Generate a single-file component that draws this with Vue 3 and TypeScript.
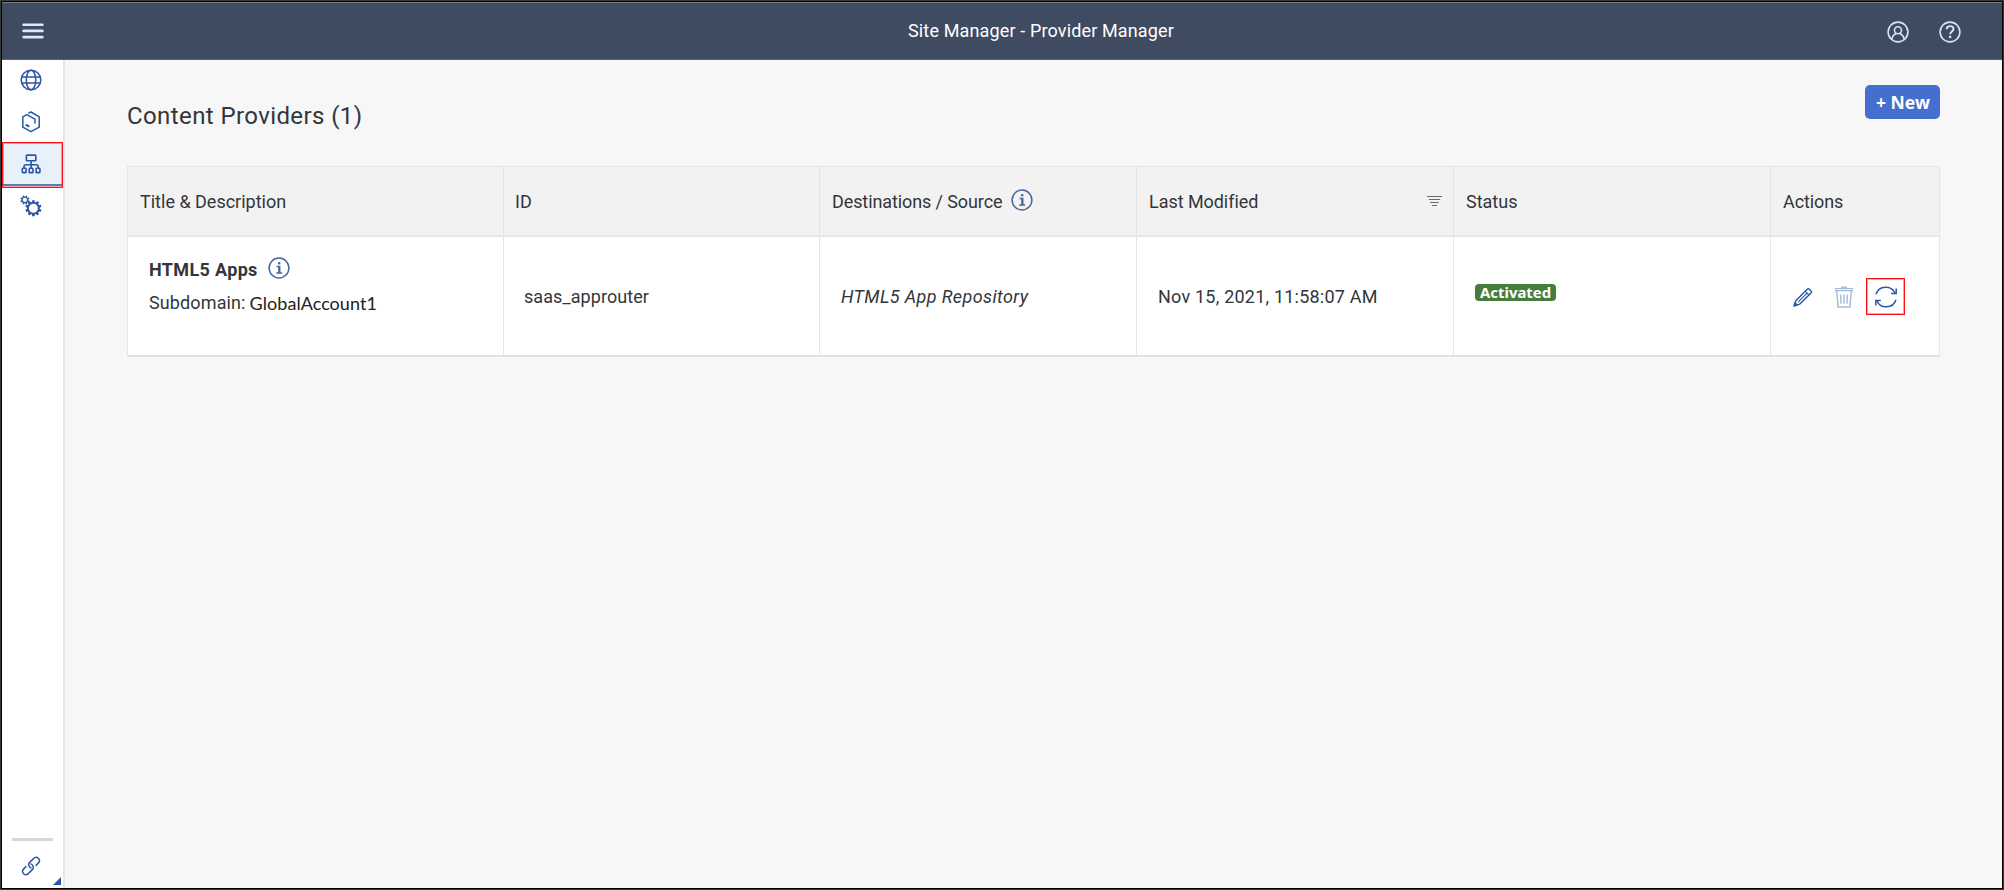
<script setup lang="ts">
interface Provider {
  title: string
  subdomain: string
  id: string
  source: string
  modified: string
  status: string
}

const providers: Provider[] = [
  {
    title: 'HTML5 Apps',
    subdomain: 'GlobalAccount1',
    id: 'saas_approuter',
    source: 'HTML5 App Repository',
    modified: 'Nov 15, 2021, 11:58:07 AM',
    status: 'Activated',
  },
]

// Outline of a cog wheel with square teeth, centred on (cx, cy)
function cog(cx: number, cy: number, outer: number, inner: number, teeth: number): string {
  const step = (Math.PI * 2) / teeth
  const pts: string[] = []
  for (let i = 0; i < teeth; i++) {
    const a = i * step + step / 2
    const corners: [number, number][] = [[-0.32, inner], [-0.26, outer], [0.26, outer], [0.32, inner]]
    for (const [f, r] of corners) {
      const x = cx + Math.cos(a + f * step) * r
      const y = cy + Math.sin(a + f * step) * r
      pts.push(`${x.toFixed(2)} ${y.toFixed(2)}`)
    }
  }
  return `M${pts.join('L')}Z`
}

const bigCog = cog(13.4, 13.3, 8.1, 6.4, 10)
const smallCog = cog(4.9, 4.9, 4.6, 3.3, 8)
</script>

<template>
  <div class="frame">
    <div class="app">
      <header class="shell">
        <button class="plain menu" aria-label="Menu">
          <svg width="22" height="16" viewBox="0 0 22 16"><path d="M1.6 1.7h18.8M1.6 7.9h18.8M1.6 14.1h18.8" stroke="#d8e9fb" stroke-width="2.6" stroke-linecap="round" /></svg>
        </button>
        <h1>Site Manager - Provider Manager</h1>
        <div class="tools">
          <svg width="22" height="22" viewBox="0 0 22 22" fill="none" stroke="#d3e6fa" stroke-width="1.6">
            <circle cx="11" cy="11" r="9.9" />
            <circle cx="11" cy="9.2" r="3.5" />
            <path d="M4.9 18.2c.4-3.2 2.6-4.9 4.2-5.4M17.1 18.2c-.4-3.2-2.6-4.9-4.2-5.4" />
          </svg>
          <svg width="22" height="22" viewBox="0 0 22 22" fill="none" stroke="#d3e6fa" stroke-width="1.6">
            <circle cx="11" cy="11" r="9.9" />
            <path d="M7.7 8.2c0-2 1.4-3.1 3.4-3.1s3.4 1.2 3.4 2.9c0 2.6-3.3 2.5-3.3 5.2" stroke-width="1.9" />
            <path d="M11.1 14.8v2.3" stroke-width="2.3" />
          </svg>
        </div>
      </header>

      <div class="body">
        <nav class="side">
          <a class="item globe">
            <svg width="22" height="22" viewBox="0 0 22 22" fill="none" stroke="#2c55a2" stroke-width="1.5">
              <circle cx="11" cy="11" r="9.8" />
              <ellipse cx="11" cy="11" rx="4.7" ry="9.8" />
              <path d="M2 7.9h18M2 14.1h18" />
            </svg>
          </a>
          <a class="item box">
            <svg width="20" height="22" viewBox="0 0 20 22" fill="none" stroke="#2c55a2" stroke-width="1.5">
              <path d="M7.4 2.2 10 1l8.2 4.8v10.4L10 20.6l-8.2-4.4V5.8l4-2.1 8.2 4.5v4.4" stroke-linejoin="round" />
              <path d="m4.7 13.7 3.6 2" stroke-width="2" />
            </svg>
          </a>
          <a class="item org active">
            <svg width="20" height="20" viewBox="0 0 20 20" fill="none" stroke="#2c55a2" stroke-width="1.6">
              <rect x="5.4" y="1.1" width="9.4" height="5.6" rx=".7" />
              <path d="M10.1 6.7v7.2M3 13.9v-1.2c0-1.2.8-2 2-2h10.2c1.2 0 2 .8 2 2v1.2" />
              <rect x="1.3" y="14.3" width="3.8" height="4.3" rx=".7" />
              <rect x="8.2" y="14.3" width="3.8" height="4.3" rx=".7" />
              <rect x="15.1" y="14.3" width="3.8" height="4.3" rx=".7" />
            </svg>
          </a>
          <a class="item cogs">
            <svg width="22" height="22" viewBox="0 0 22 22" fill="#2c55a2" fill-rule="evenodd">
              <path :d="bigCog + 'M8.9 13.3a4.5 4.5 0 1 0 9 0a4.5 4.5 0 1 0-9 0Z'" />
              <path :d="smallCog + 'M2.8 4.9a2.1 2.1 0 1 0 4.2 0a2.1 2.1 0 1 0-4.2 0Z'" />
            </svg>
          </a>
          <div class="foot">
            <hr />
            <svg class="link" width="20" height="20" viewBox="0 0 20 20" fill="none" stroke="#2c55a2" stroke-width="1.5">
              <g transform="rotate(-45 10 10)">
                <path d="M8.6 12c-.9-2.9.3-5.5 3-5.5h5.6c4.6 0 4.6 6.6 0 6.6h-3.8" />
                <path d="M11.4 8c.9 2.9-.3 5.5-3 5.5H2.8c-4.6 0-4.6-6.6 0-6.6h3.8" />
              </g>
            </svg>
            <svg class="corner" width="8" height="8" viewBox="0 0 8 8"><path d="M8 0v8H0z" fill="#2c55a2" /></svg>
          </div>
        </nav>

        <main>
          <div class="bar">
            <h2>Content Providers (1)</h2>
            <button class="new">+ New</button>
          </div>

          <section class="table">
            <div class="row head">
              <div><span>Title &amp; Description</span></div>
              <div><span>ID</span></div>
              <div>
                <span class="t3">Destinations / Source</span>
                <svg class="info" width="22" height="22" viewBox="0 0 22 22" fill="none" stroke="#48669b" stroke-width="1.5">
                  <circle cx="11" cy="11" r="9.9" />
                  <path d="M8.6 9.4h2.7v6.4M8.3 16h5.8" stroke-width="1.5" /><path d="M11.4 9v7" stroke-width="2.1" /><path d="M11.2 5.1v2.3" stroke-width="2.3" />
                </svg>
              </div>
              <div>
                <span class="t4">Last Modified</span>
                <svg class="filter" width="15" height="11" viewBox="0 0 15 11" stroke="#6a6d70" stroke-width="1"><path d="M0 .5h15M1.8 3.5h11.4M3.2 6.5h8.6M5 9.5h5" /></svg>
              </div>
              <div><span>Status</span></div>
              <div><span class="t6">Actions</span></div>
            </div>

            <div v-for="p in providers" :key="p.id" class="row data">
              <div class="first">
                <div class="name">
                  <strong>{{ p.title }}</strong>
                  <svg class="info" width="22" height="22" viewBox="0 0 22 22" fill="none" stroke="#48669b" stroke-width="1.5">
                    <circle cx="11" cy="11" r="9.9" />
                    <path d="M8.6 9.4h2.7v6.4M8.3 16h5.8" stroke-width="1.5" /><path d="M11.4 9v7" stroke-width="2.1" /><path d="M11.2 5.1v2.3" stroke-width="2.3" />
                  </svg>
                </div>
                <div class="sub"><span>Subdomain:</span><span class="account">{{ p.subdomain }}</span></div>
              </div>
              <div class="second"><span class="id">{{ p.id }}</span></div>
              <div><em>{{ p.source }}</em></div>
              <div><span class="date">{{ p.modified }}</span></div>
              <div><span class="badge">{{ p.status }}</span></div>
              <div class="actions">
                <svg width="20" height="20" viewBox="0 0 20 20" fill="none" stroke="#2c55a2" stroke-width="1.4" stroke-linejoin="round">
                  <path d="M1.2 18.8 2.9 13.6 14.3 2.2c.7-.7 1.3-.7 2 0l1.7 1.7c.7.7.7 1.3 0 2L6.6 17.2z" />
                  <path d="m12.2 4.3 3.7 3.7M5 15.2l8.6-8.6" stroke-width="1.1" /><path d="M1.2 18.8l.8-3 2.2 2.2z" fill="#2c55a2" />
                </svg>
                <svg width="20" height="22" viewBox="0 0 20 22" fill="none" stroke="#a9bcdc" stroke-width="1.5">
                  <path d="M7 1.3h6" stroke-width="1.6" /><path d="M.7 2.7h18.6M.7 4.7h18.6" stroke-width="1.3" />
                  <path d="m2.7 5 1.4 16h11.8l1.4-16M6.6 8.5l.4 9.2M10 8.5v9.2M13.4 8.5l-.4 9.2" />
                </svg>
                <button class="plain sync" aria-label="Refresh">
                  <svg width="24" height="24" viewBox="0 0 24 24" fill="none" stroke="#2c55a2" stroke-width="1.5">
                    <path d="M2 9.3A10.3 10.3 0 0 1 21.2 8.3M22 14.7A10.3 10.3 0 0 1 2.8 15.7" />
                    <path d="M17.2 8.6h5V3.4M6.8 15.4h-5v5.2" />
                  </svg>
                </button>
              </div>
            </div>
          </section>
        </main>
      </div>
    </div>
  </div>
</template>

<style scoped>
* {
  box-sizing: border-box;
}
.frame {
  width: 2004px;
  height: 890px;
  padding: 1px;
  background: #3a3a38;
  font: 400 18px/24px Roboto, "Liberation Sans", sans-serif;
  color: #32363a;
  overflow: hidden;
}
.app {
  display: flex;
  flex-direction: column;
  height: 888px;
  border: 1px solid #000;
  background: #f7f7f7;
}
svg {
  display: block;
  flex: none;
}
.plain {
  padding: 0;
  border: 0;
  background: none;
}
.shell {
  display: grid;
  grid-template-columns: 1fr auto 1fr;
  align-items: center;
  height: 58px;
  flex: none;
  padding: 0 41px 0 20px;
  background: #3f4b61;
  border-top: 1px solid #7b8088;
  border-bottom: 1px solid #55627a;
}
.menu {
  justify-self: start;
}
h1 {
  margin: 0 0 0 99px;
  font-size: 18px;
  line-height: 24px;
  font-weight: 400;
  letter-spacing: 0.14px;
  color: #fff;
}
.tools {
  display: flex;
  justify-content: flex-end;
  gap: 30px;
  margin-top: 1px;
}
.body {
  display: flex;
  flex: 1;
  min-height: 0;
}
.side {
  display: flex;
  flex-direction: column;
  width: 63px;
  background: #fff;
  border-right: 2px solid #e5e5e5;
}
.item {
  display: flex;
  align-items: center;
  justify-content: center;
  height: 41px;
  padding: 0 4px 1px 0;
}
.box {
  height: 42px;
  padding-top: 1px;
}
.org {
  height: 46px;
  margin: -1px 0 0;
  padding: 0 4px 2px 0;
  border: 2px solid #f8131b;
  border-width: 1px;
  outline: 1px solid rgba(248, 19, 27, 0.4);
  outline-offset: -2px;
  background: #e8f0fa;
  box-shadow: inset 0 -1px 0 #fff, inset 0 -3px 0 #5c7fb6;
}
.cogs {
  height: 38px;
  padding: 0 3px 2px 0;
}
.foot {
  position: relative;
  margin-top: auto;
  height: 50px;
}
.foot hr {
  margin: 0 10px;
  height: 3px;
  border: 0;
  background: #d7d7d7;
}
.link {
  margin: 15px 0 0 19px;
}
.corner {
  position: absolute;
  right: 2px;
  bottom: 3px;
}
main {
  flex: 1;
  padding: 24px 62px 0 62px;
}
.bar {
  display: flex;
  justify-content: space-between;
  align-items: flex-start;
  height: 82px;
}
h2 {
  margin: 16px 0 0;
  font-size: 24px;
  line-height: 32px;
  font-weight: 400;
  letter-spacing: 0.4px;
}
.new {
  width: 75px;
  height: 34px;
  margin-top: 1px;
  padding: 0 0 1px 1px;
  border: 0;
  border-radius: 5px;
  background: #446ed0;
  color: #fff;
  font: 700 17.5px/32px "Noto Sans", "Open Sans", sans-serif;
}
.table {
  border: 1px solid #e5e5e5;
  border-bottom: 2px solid #e2e2e2;
  background: #fff;
}
.row {
  display: grid;
  grid-template-columns: 376px 316px 317px 317px 317px 1fr;
}
.row > div {
  display: flex;
  align-items: center;
  border-right: 1px solid #e5e5e5;
}
.row > div:last-child {
  border-right: 0;
}
.head {
  height: 70px;
  background: #f2f2f2;
  border-bottom: 2px solid #e7e7e7;
}
.head > div {
  padding: 1px 11px 0 12px;
}
.head > div:nth-child(2) {
  padding-left: 11px;
}
.head .info {
  margin: -4px 0 0 9px;
}
.t3 {
  letter-spacing: -0.1px;
}
.t4 {
  letter-spacing: -0.05px;
}
.t6 {
  letter-spacing: -0.1px;
}
.filter {
  margin-left: auto;
}
.data {
  height: 118px;
}
.data > div {
  padding: 1px 20px 0 21px;
}
.data > .second {
  padding-left: 20px;
}
.data > .first {
  flex-direction: column;
  align-items: flex-start;
  justify-content: flex-start;
  padding-top: 21px;
}
.name {
  display: flex;
  align-items: center;
  height: 24px;
}
.name .info {
  margin: -4px 0 0 10px;
}
strong {
  font-weight: 700;
  letter-spacing: 0.35px;
}
.sub {
  display: flex;
  align-items: baseline;
  margin-top: 8px;
  letter-spacing: 0.12px;
}
.account {
  margin-left: 4px;
  position: relative;
  top: 1px;
  font-family: Lato, sans-serif;
  color: #222;
  letter-spacing: 0.05px;
}
.id {
  letter-spacing: 0.08px;
}
em {
  letter-spacing: 0.38px;
}
.date {
  letter-spacing: 0.22px;
}
.badge {
  height: 17px;
  margin-top: -9px;
  padding: 0 5px;
  border-radius: 4px;
  background: #467d3c;
  color: #fff;
  font: 700 14.9px/16px "Noto Sans", "Open Sans", sans-serif;
}
.data > .actions {
  padding: 1px 0 0 22px;
}
.actions svg + svg {
  margin-left: 21px;
}
.sync {
  display: flex;
  align-items: center;
  justify-content: center;
  width: 39px;
  height: 37px;
  margin-left: 12px;
  border: 1px solid #f8131b;
  outline: 1px solid rgba(248, 19, 27, 0.4);
  outline-offset: -2px;
}
</style>

<style>
body {
  margin: 0;
}
</style>
